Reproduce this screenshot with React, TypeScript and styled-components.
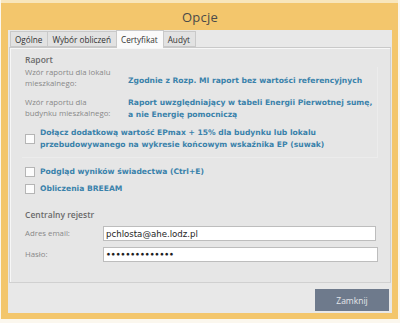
import styled, { createGlobalStyle } from 'styled-components';

const GlobalStyle = createGlobalStyle`
  html, body {
    margin: 0;
    padding: 0;
    background: #fbf7ee;
    font-family: "Open Sans", "DejaVu Sans", sans-serif;
  }
`;

const Window = styled.div`
  width: 397px;
  height: 319px;
  margin-left: 1px;
  box-sizing: border-box;
  background: #f3c66c;
  border-top: 3px solid #f8e6bc;
  display: flex;
  flex-direction: column;
  padding: 0 6px 6px 7px;
`;

const TitleBar = styled.div`
  height: 27px;
  flex: none;
  display: flex;
  align-items: center;
  justify-content: center;
  font-size: 13px;
  color: #4a4a4a;
  letter-spacing: 0.2px;
`;

const Client = styled.div`
  flex: 1;
  background: #e8e8e8;
  display: flex;
  flex-direction: column;
  padding: 0 1px 0 1px;
`;

const TabStrip = styled.div`
  height: 17px;
  display: flex;
  align-items: flex-end;
  padding-left: 1px;
`;

const Tab = styled.div<{ $active?: boolean }>`
  height: ${p => (p.$active ? 18 : 16)}px;
  margin-bottom: ${p => (p.$active ? -1 : 0)}px;
  position: relative;
  z-index: ${p => (p.$active ? 2 : 1)};
  box-sizing: border-box;
  border: 1px solid #c9c9c9;
  border-bottom: ${p => (p.$active ? 'none' : '1px solid #c9c9c9')};
  margin-right: -1px;
  background: ${p => (p.$active ? '#fafafa' : '#e2e2e2')};
  color: #333;
  font-size: 8.2px;
  display: flex;
  align-items: center;
  padding: 0 5px 0 4px;
`;

const Panel = styled.div`
  height: 236px;
  box-sizing: border-box;
  border: 1px solid #d0d0d0;
  border-top-color: #c9c9c9;
  box-shadow: inset 1px 1px 0 #f7f7f7;
  background: #e6e6e6;
  padding: 6px 12px 0 15px;
  display: flex;
  flex-direction: column;
`;

const SectionTitle = styled.div<{ $top?: number }>`
  font-size: 8.5px;
  font-weight: 600;
  color: #6a6a6a;
  margin-top: ${p => p.$top ?? 0}px;
  line-height: 12px;
`;

const ReportGroup = styled.div`
  margin: 1px 0 0 -3px;
  padding: 0 0 6px 3px;
  border-right: 1px solid #ececec;
  border-bottom: 1px solid #ececec;
`;

const ReportRow = styled.div<{ $top?: number }>`
  display: grid;
  grid-template-columns: 103px 1fr;
  margin-top: ${p => p.$top ?? 0}px;
  align-items: start;
`;

const Label = styled.div`
  font-size: 7.8px;
  color: #888;
  line-height: 11px;
`;

const Value = styled.div<{ $offset?: number }>`
  font-family: "DejaVu Sans", sans-serif;
  font-size: 7.6px;
  font-weight: 700;
  color: #3a82ab;
  line-height: 12px;
  padding-top: ${p => p.$offset ?? 0}px;
  white-space: nowrap;
`;

const CheckRow = styled.div<{ $top?: number }>`
  display: flex;
  align-items: center;
  gap: 5px;
  margin-top: ${p => p.$top ?? 0}px;
`;

const Box = styled.div`
  width: 10px;
  height: 10px;
  flex: none;
  box-sizing: border-box;
  background: #fcfcfc;
  border: 1px solid #b5b5b5;
`;

const CheckText = styled(Value)``;

const FieldRow = styled.div<{ $top?: number }>`
  display: grid;
  grid-template-columns: 78px 1fr;
  align-items: center;
  margin-top: ${p => p.$top ?? 0}px;
`;

const Input = styled.div<{ $right?: number; $secret?: boolean }>`
  height: 15px;
  box-sizing: border-box;
  background: #fff;
  border: 1px solid #bdbdbd;
  margin-right: ${p => p.$right ?? 0}px;
  font-family: "DejaVu Sans", sans-serif;
  font-size: ${p => (p.$secret ? 7.6 : 8.6)}px;
  font-weight: ${p => (p.$secret ? 700 : 400)};
  color: #1e1e1e;
  padding: 0 2px;
  display: flex;
  align-items: center;
  white-space: nowrap;
  overflow: hidden;
`;

const Footer = styled.div`
  flex: 1;
  display: flex;
  justify-content: flex-end;
  align-items: flex-start;
  padding: 6px 2px 0 0;
`;

const Button = styled.div`
  width: 74px;
  height: 22px;
  background: #6e7a8c;
  color: #e4e6ea;
  font-size: 8.5px;
  display: flex;
  align-items: center;
  justify-content: center;
`;

const App = () => (
  <>
    <GlobalStyle />
    <Window>
      <TitleBar>Opcje</TitleBar>
      <Client>
        <TabStrip>
          <Tab>Ogólne</Tab>
          <Tab>Wybór obliczeń</Tab>
          <Tab $active>Certyfikat</Tab>
          <Tab>Audyt</Tab>
        </TabStrip>
        <Panel>
          <SectionTitle>Raport</SectionTitle>
          <ReportGroup>
            <ReportRow>
              <Label>
                Wzór raportu dla lokalu
                <br />
                mieszkalnego:
              </Label>
              <Value $offset={8}>Zgodnie z Rozp. MI raport bez wartości referencyjnych</Value>
            </ReportRow>
            <ReportRow $top={8}>
              <Label>
                Wzór raportu dla
                <br />
                budynku mieszkalnego:
              </Label>
              <Value>
                Raport uwzględniający w tabeli Energii Pierwotnej sumę,
                <br />a nie Energię pomocniczą
              </Value>
            </ReportRow>
            <CheckRow $top={6}>
              <Box />
              <CheckText>
                Dołącz dodatkową wartość EPmax + 15% dla budynku lub lokalu
                <br />
                przebudowywanego na wykresie końcowym wskaźnika EP (suwak)
              </CheckText>
            </CheckRow>
          </ReportGroup>
          <CheckRow $top={8}>
            <Box />
            <CheckText>Podgląd wyników świadectwa (Ctrl+E)</CheckText>
          </CheckRow>
          <CheckRow $top={5}>
            <Box />
            <CheckText>Obliczenia BREEAM</CheckText>
          </CheckRow>
          <SectionTitle $top={14}>Centralny rejestr</SectionTitle>
          <FieldRow $top={5}>
            <Label>Adres email:</Label>
            <Input $right={2}>pchlosta@ahe.lodz.pl</Input>
          </FieldRow>
          <FieldRow $top={6}>
            <Label>Hasło:</Label>
            <Input $secret>••••••••••••••</Input>
          </FieldRow>
        </Panel>
        <Footer>
          <Button>Zamknij</Button>
        </Footer>
      </Client>
    </Window>
  </>
);

export default App;
